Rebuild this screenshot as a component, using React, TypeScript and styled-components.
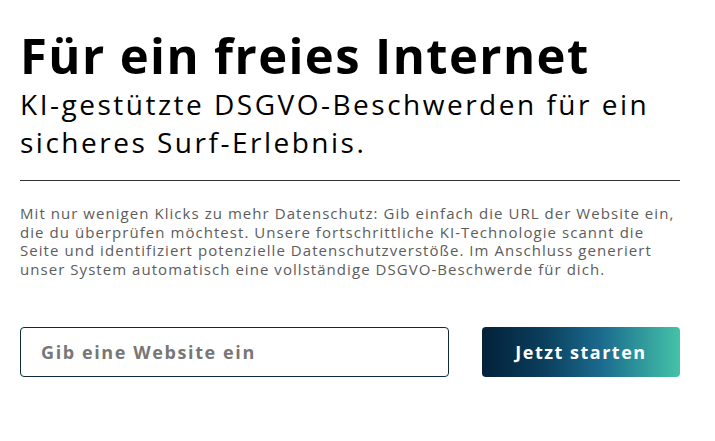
import styled, { createGlobalStyle } from "styled-components";

const GlobalStyle = createGlobalStyle`
  * { box-sizing: border-box; }
  body {
    margin: 0;
    background: #fff;
    font-family: "Open Sans", "Liberation Sans", sans-serif;
    color: #000;
  }
`;

const Hero = styled.section`
  width: 715px;
  padding: 25px 35px 0 20px;
  display: flex;
  flex-direction: column;
`;

const Title = styled.h1`
  margin: 0;
  font-size: 49px;
  font-weight: 700;
  line-height: 60px;
  letter-spacing: 1.4px;
`;

const Subtitle = styled.h2`
  margin: 0;
  font-size: 28px;
  font-weight: 400;
  line-height: 38px;
  letter-spacing: 2.5px;
`;

const Divider = styled.hr`
  margin: 19px 0 0;
  border: none;
  border-top: 1px solid #333;
`;

const Intro = styled.p`
  margin: 23px 0 0;
  font-size: 15px;
  line-height: 18.6px;
  color: #5c5c5c;
  letter-spacing: 1.05px;
`;

const Form = styled.form`
  margin-top: 49px;
  display: flex;
  gap: 33px;
`;

const UrlInput = styled.input`
  flex: 1;
  height: 50px;
  border: 1px solid #0b2a3c;
  border-radius: 4px;
  padding: 0 20px;
  font-family: inherit;
  font-size: 18px;
  font-weight: 700;
  letter-spacing: 1.6px;
  color: #333;
  outline: none;
  &::placeholder {
    color: #777;
  }
`;

const StartButton = styled.button`
  width: 198px;
  height: 50px;
  border: none;
  border-radius: 4px;
  background: linear-gradient(90deg, #03213a 0%, #0b3d5a 30%, #1a6a8e 60%, #44c3a8 100%);
  color: #fff;
  font-family: inherit;
  font-size: 18px;
  font-weight: 700;
  letter-spacing: 1.5px;
  cursor: pointer;
`;

export default function App() {
  return (
    <>
      <GlobalStyle />
      <Hero>
        <Title>Für ein freies Internet</Title>
        <Subtitle>
          KI-gestützte DSGVO-Beschwerden für ein sicheres Surf-Erlebnis.
        </Subtitle>
        <Divider />
        <Intro>
          Mit nur wenigen Klicks zu mehr Datenschutz: Gib einfach die URL der
          Website ein, die du überprüfen möchtest. Unsere fortschrittliche
          KI-Technologie scannt die Seite und identifiziert potenzielle
          Datenschutzverstöße. Im Anschluss generiert unser System automatisch
          eine vollständige DSGVO-Beschwerde für dich.
        </Intro>
        <Form onSubmit={(e) => e.preventDefault()}>
          <UrlInput type="text" placeholder="Gib eine Website ein" />
          <StartButton type="submit">Jetzt starten</StartButton>
        </Form>
      </Hero>
    </>
  );
}
